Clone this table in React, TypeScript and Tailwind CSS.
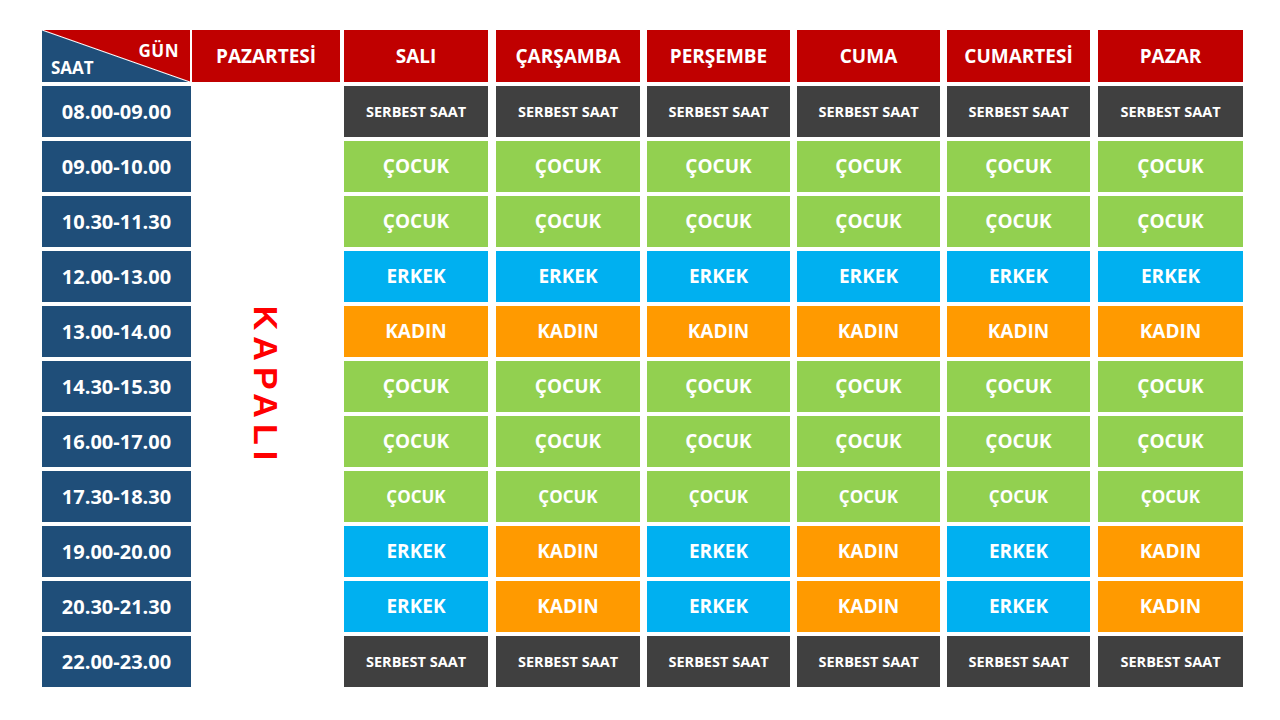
import React from "react";

type Kind = "S" | "C" | "E" | "K";

const cols = [
  { name: "SALI", cls: "ml-[4px] w-[144px]" },
  { name: "ÇARŞAMBA", cls: "ml-[8px] w-[144px]" },
  { name: "PERŞEMBE", cls: "ml-[7px] w-[143px]" },
  { name: "CUMA", cls: "ml-[7px] w-[143px]" },
  { name: "CUMARTESİ", cls: "ml-[7px] w-[143px]" },
  { name: "PAZAR", cls: "ml-[8px] w-[145px]" },
];

const rows: { time: string; cells: Kind[]; small?: boolean }[] = [
  { time: "08.00-09.00", cells: ["S", "S", "S", "S", "S", "S"] },
  { time: "09.00-10.00", cells: ["C", "C", "C", "C", "C", "C"] },
  { time: "10.30-11.30", cells: ["C", "C", "C", "C", "C", "C"] },
  { time: "12.00-13.00", cells: ["E", "E", "E", "E", "E", "E"] },
  { time: "13.00-14.00", cells: ["K", "K", "K", "K", "K", "K"] },
  { time: "14.30-15.30", cells: ["C", "C", "C", "C", "C", "C"] },
  { time: "16.00-17.00", cells: ["C", "C", "C", "C", "C", "C"] },
  { time: "17.30-18.30", cells: ["C", "C", "C", "C", "C", "C"], small: true },
  { time: "19.00-20.00", cells: ["E", "K", "E", "K", "E", "K"] },
  { time: "20.30-21.30", cells: ["E", "K", "E", "K", "E", "K"] },
  { time: "22.00-23.00", cells: ["S", "S", "S", "S", "S", "S"] },
];

const kindStyle: Record<Kind, { bg: string; label: string }> = {
  S: { bg: "bg-[#404040]", label: "SERBEST SAAT" },
  C: { bg: "bg-[#92d050]", label: "ÇOCUK" },
  E: { bg: "bg-[#00b0f0]", label: "ERKEK" },
  K: { bg: "bg-[#ff9a00]", label: "KADIN" },
};

export default function App() {
  return (
    <div className="w-[1280px] h-[720px] bg-white pl-[42px] pt-[30px] font-['Open_Sans',sans-serif] text-white font-bold">
      <div className="grid grid-cols-[repeat(8,auto)] grid-rows-[52px_repeat(11,51px)] gap-y-[4px] w-max">
        {/* Header corner */}
        <div className="w-[148px] relative bg-[linear-gradient(to_top_right,#1f4e79_calc(50%-1px),#ffffff_50%,#c00000_calc(50%+1px))]">
          <span className="absolute right-[11px] top-[12px] text-[17px] leading-none tracking-[0.03em]">GÜN</span>
          <span className="absolute left-[9px] bottom-[6px] text-[17px] leading-none">SAAT</span>
        </div>
        <div className="ml-[1px] w-[148px] bg-[#c00000] flex items-center justify-center text-[19px]">
          PAZARTESİ
        </div>
        {cols.map((c) => (
          <div key={c.name} className={`${c.cls} bg-[#c00000] flex items-center justify-center text-[19px]`}>
            {c.name}
          </div>
        ))}

        {rows.map((r, ri) => (
          <React.Fragment key={r.time}>
            <div className="w-[149px] bg-[#1f4e79] flex items-center justify-center text-[20px]">
              {r.time}
            </div>
            {ri === 0 && (
              <div className="row-span-11 ml-[1px] w-[148px] bg-white flex items-center justify-center">
                <span className="mb-[7px] rotate-90 whitespace-nowrap text-[#ff0000] font-['Liberation_Sans',sans-serif] text-[34px] leading-none font-bold tracking-[0.18em] pl-[0.18em]">
                  KAPALI
                </span>
              </div>
            )}
            {r.cells.map((k, ci) => {
              const s = kindStyle[k];
              const size = k === "S" ? "text-[14.5px]" : r.small ? "text-[17px]" : "text-[19px]";
              return (
                <div
                  key={ci}
                  className={`${cols[ci].cls} ${s.bg} ${size} flex items-center justify-center`}
                >
                  {s.label}
                </div>
              );
            })}
          </React.Fragment>
        ))}
      </div>
    </div>
  );
}
